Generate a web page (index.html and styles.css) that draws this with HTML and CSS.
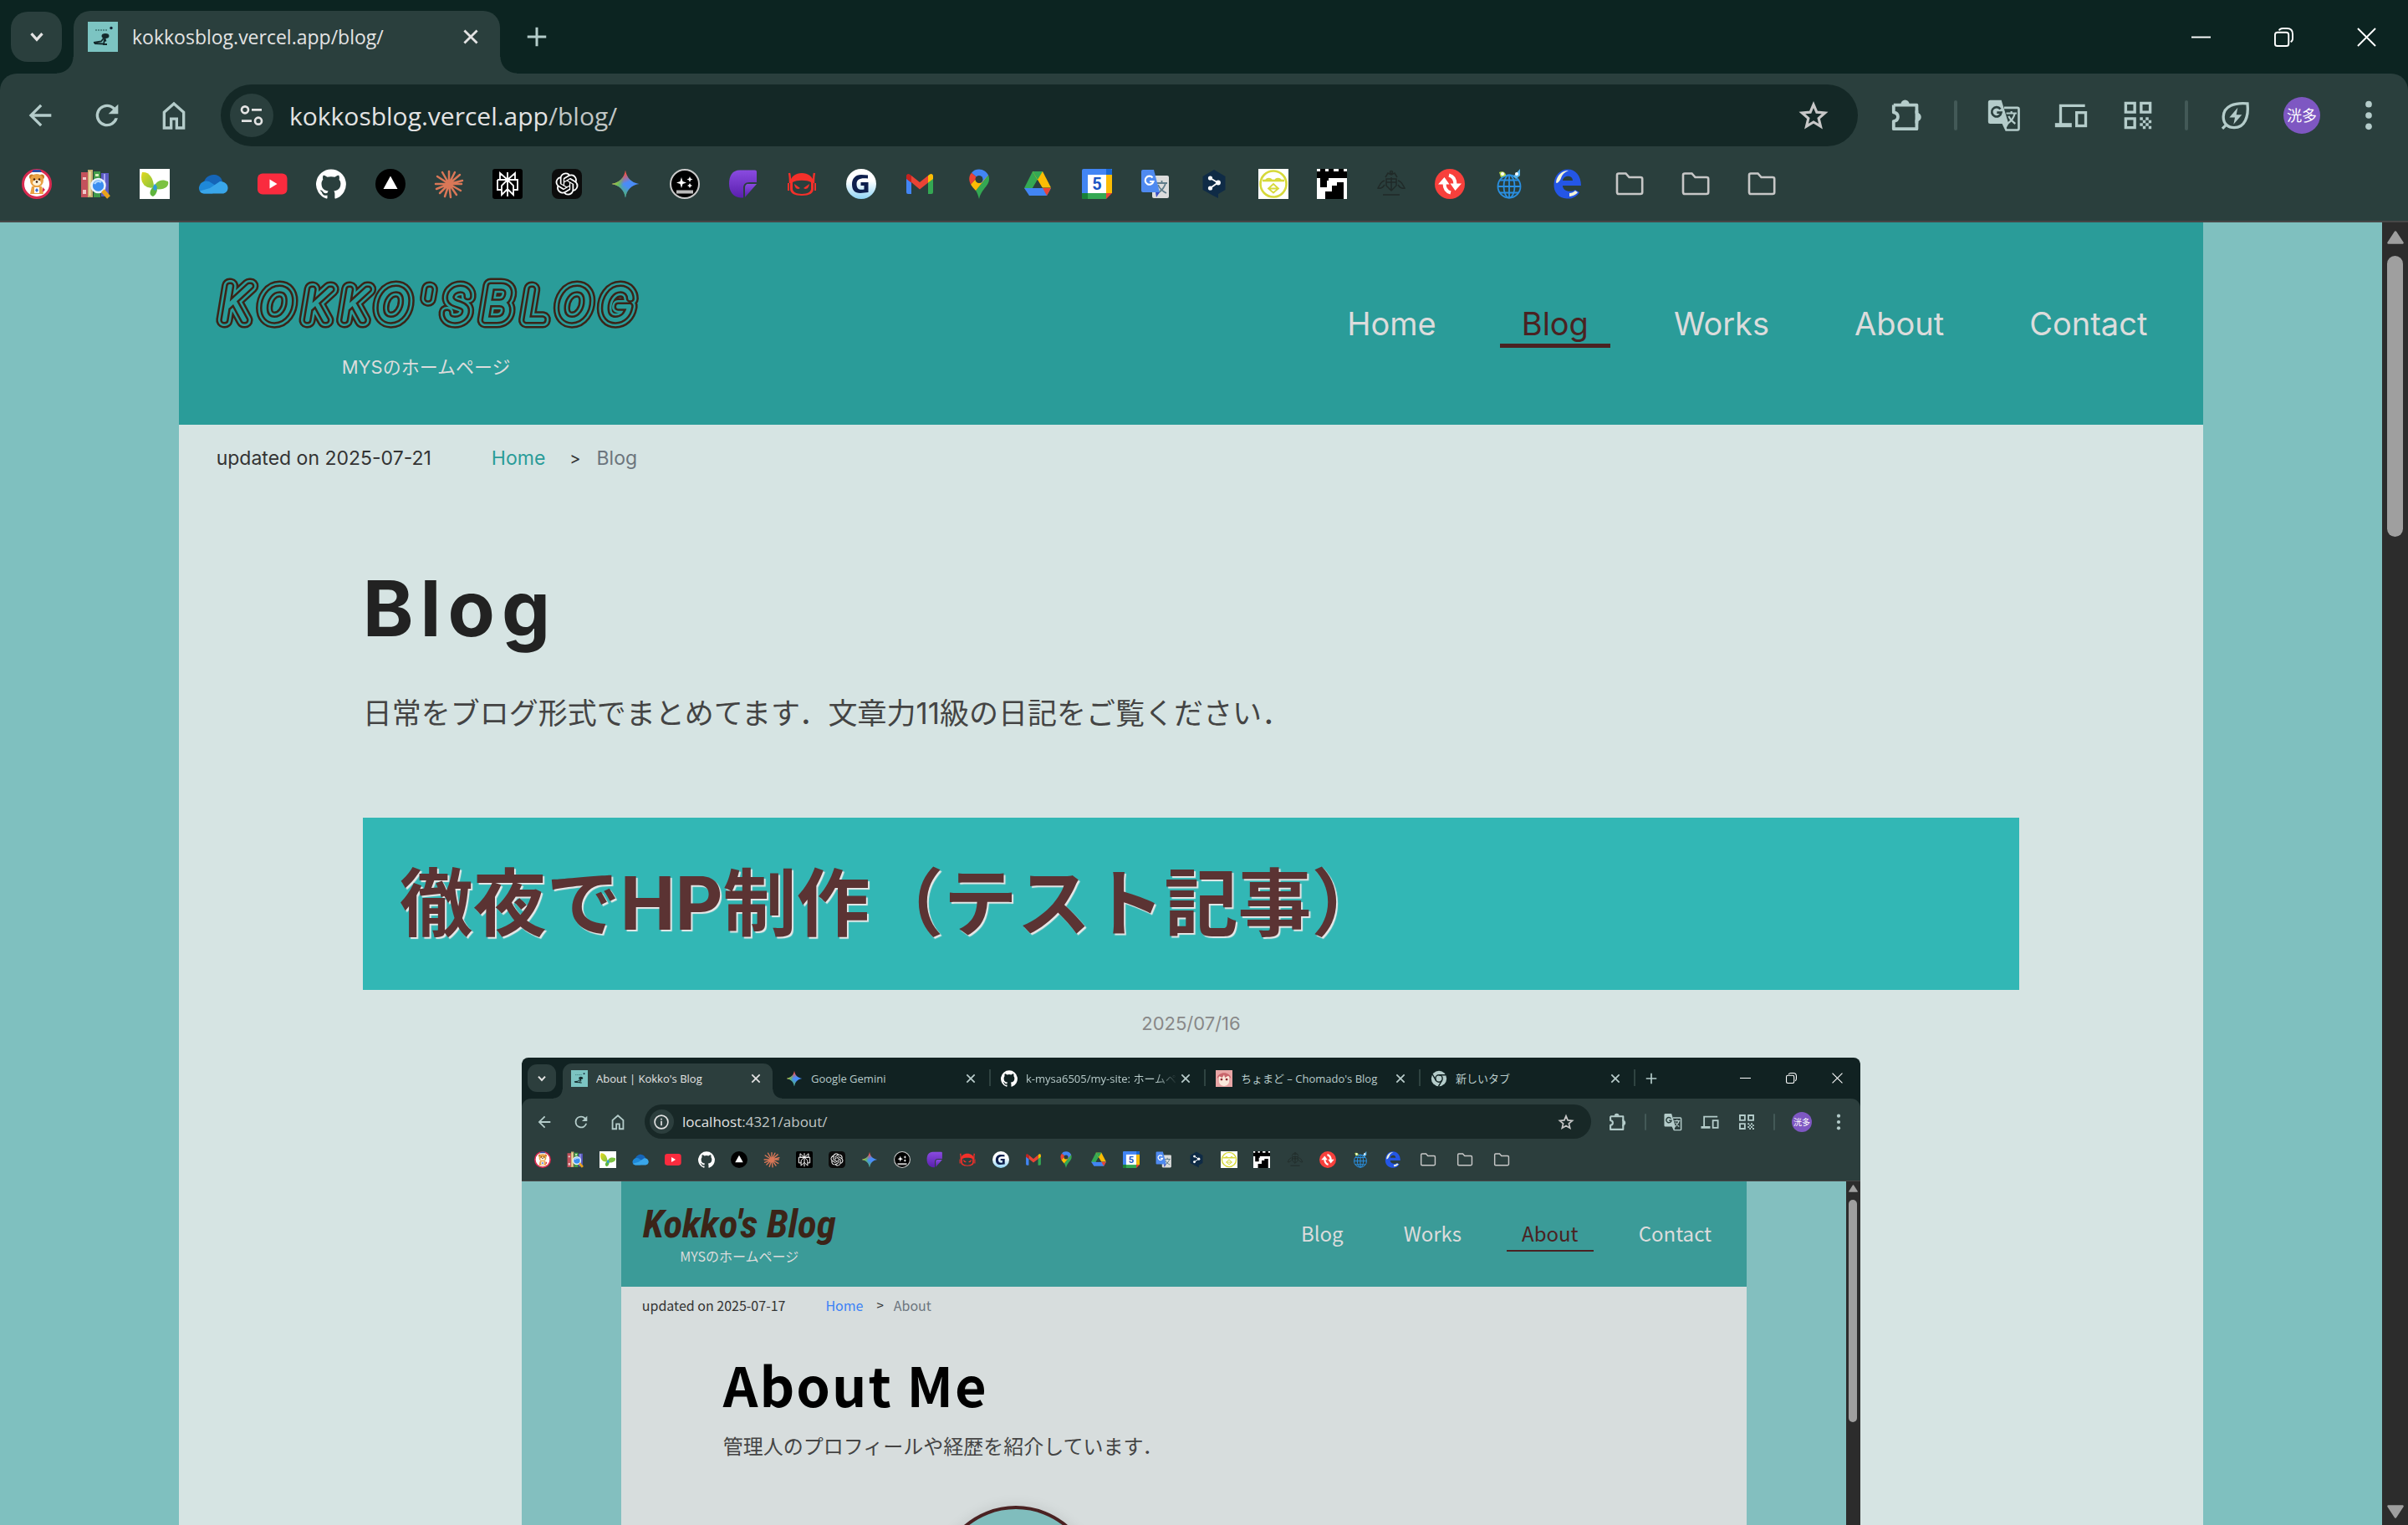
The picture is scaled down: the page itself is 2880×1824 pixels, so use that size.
FILE: index.html
```html
<!DOCTYPE html>
<html lang="ja">
<head>
<meta charset="utf-8">
<title>Blog | Kokko's Blog</title>
<link rel="stylesheet" href="styles.css">
</head>
<body>
<svg class="sprite" aria-hidden="true">
  <defs>
    <linearGradient id="g-gem" x1="0.4" y1="0.05" x2="0.6" y2="0.55"><stop offset="0.2" stop-color="#f0544c"/><stop offset="0.8" stop-color="#4a8cf7"/></linearGradient>
    <linearGradient id="g-gem2" x1="0" y1="0.4" x2="0.55" y2="0.55"><stop offset="0.1" stop-color="#f7c32e"/><stop offset="0.5" stop-color="#7fbe4a"/><stop offset="1" stop-color="#4fb865" stop-opacity="0"/></linearGradient>
    <linearGradient id="g-gem3" x1="0.35" y1="1" x2="0.6" y2="0.6"><stop offset="0.2" stop-color="#4fb865"/><stop offset="1" stop-color="#4fb865" stop-opacity="0"/></linearGradient>
    <linearGradient id="g-pur" x1="0" y1="0" x2="0" y2="1"><stop offset="0" stop-color="#8a4be0"/><stop offset="1" stop-color="#5a1fae"/></linearGradient>
    <linearGradient id="g-sky" x1="0" y1="0" x2="0" y2="1"><stop offset="0.4" stop-color="#ffffff"/><stop offset="1" stop-color="#8fd4f5"/></linearGradient>
    <linearGradient id="g-leaf" x1="0" y1="0" x2="1" y2="1"><stop offset="0" stop-color="#e3d81e"/><stop offset="1" stop-color="#86c440"/></linearGradient>
  </defs>

  <symbol id="chevron" viewBox="0 0 24 24"><path d="M6 8.500l6 6.500 6-6.500" fill="none" stroke="currentColor" stroke-width="3"/></symbol>
  <symbol id="close" viewBox="0 0 24 24"><path d="M5 5l14 14M19 5L5 19" fill="none" stroke="currentColor" stroke-width="2.600"/></symbol>
  <symbol id="plus" viewBox="0 0 24 24"><path d="M12 4.500v15M4.500 12h15" fill="none" stroke="currentColor" stroke-width="2"/></symbol>
  <symbol id="win-min" viewBox="0 0 24 24"><path d="M0 12h24" stroke="currentColor" stroke-width="2" /></symbol>
  <symbol id="win-max" viewBox="0 0 24 24"><rect x="1" y="6" width="17" height="17" rx="3" fill="none" stroke="currentColor" stroke-width="2"/><path d="M6 3.500C7 1.700 8.300 1 10.500 1H16c4.500 0 7 2.500 7 7v5.500c0 2-.7 3.500-2.500 4.500" fill="none" stroke="currentColor" stroke-width="2"/></symbol>
  <symbol id="win-close" viewBox="0 0 24 24"><path d="M1 1l22 22M23 1L1 23" stroke="currentColor" stroke-width="2"/></symbol>
  <symbol id="back" viewBox="0 0 24 24"><path d="M20 11H7.800l5.600-5.600L12 4l-8 8 8 8 1.400-1.400L7.800 13H20z" fill="currentColor"/></symbol>
  <symbol id="reload" viewBox="0 0 24 24"><path d="M17.650 6.350A7.960 7.960 0 0 0 12 4a8 8 0 1 0 7.730 10h-2.080A6 6 0 1 1 12 6c1.660 0 3.140.69 4.220 1.780L13 11h7V4z" fill="currentColor"/></symbol>
  <symbol id="home" viewBox="0 0 24 24"><path d="M5 21V9.700L12 3.600l7 6.100V21h-5v-6.500h-4V21z" fill="none" stroke="currentColor" stroke-width="2"/></symbol>
  <symbol id="tune" viewBox="0 0 24 24"><g fill="none" stroke="currentColor" stroke-width="2"><circle cx="6" cy="7" r="3"/><path d="M12 7h9M3 17h9"/><circle cx="18" cy="17" r="3"/></g></symbol>
  <symbol id="info" viewBox="0 0 24 24"><circle cx="12" cy="12" r="9.500" fill="none" stroke="currentColor" stroke-width="2"/><path d="M11 10.500h2V17h-2zM11 7h2v2h-2z" fill="currentColor"/></symbol>
  <symbol id="star" viewBox="0 0 24 24"><path d="M12 4.200l2.300 5.500 5.900.5-4.500 3.900 1.400 5.800-5.100-3.100-5.100 3.100 1.400-5.800-4.500-3.900 5.900-.5z" fill="none" stroke="currentColor" stroke-width="1.900"/></symbol>
  <symbol id="puzzle" viewBox="2.500 1.500 21 21"><path d="M4.500 5.500H19v5.300M19 14.800v5.700H4.500v-4.800c3.600-.6 3.600-5 0-5.600V5.500" fill="none" stroke="currentColor" stroke-width="2" stroke-linejoin="round"/><path d="M9 5a2.700 2.700 0 0 1 5.400 0zM19 10.200a2.800 2.800 0 0 1 0 5.600z" fill="currentColor"/><path d="M19 9v8" stroke="currentColor" stroke-width="2"/></symbol>
  <symbol id="translate" viewBox="0 0 24 24"><path d="M12 6.500h9.500a1 1 0 0 1 1 1v14a1 1 0 0 1-1 1H13.500L11 17" fill="none" stroke="currentColor" stroke-width="1.600"/><path d="M2 1h8l5.200 17H2a1.500 1.500 0 0 1-1.500-1.500v-14A1.500 1.500 0 0 1 2 1zM12 18h3.200l-2.400 4.500z" fill="currentColor"/><path d="M9.300 7.500A3.400 3.400 0 1 0 9.900 10H6.800" fill="none" stroke="#2a3f3d" stroke-width="1.600"/><path d="M13.500 10.500h7.500M17.200 9v1.500M19.600 10.500c-.6 3-2.500 5.500-5 7.300M15.200 12.500c1 2.200 2.600 4 4.800 5.500" fill="none" stroke="currentColor" stroke-width="1.300"/></symbol>
  <symbol id="devices" viewBox="0 0 24 24"><path d="M22 5H4.500v13" fill="none" stroke="currentColor" stroke-width="2"/><path d="M.5 17.500h12v3H.5z" fill="currentColor"/><rect x="16" y="10" width="6.500" height="9.500" fill="none" stroke="currentColor" stroke-width="2"/></symbol>
  <symbol id="qr" viewBox="-0.500 -0.500 26 26"><g fill="none" stroke="currentColor" stroke-width="2.200"><path d="M3 3h7v7H3zM15 3h7v7h-7zM3 15h7v7H3z"/></g><path d="M14 14h2.300v2.300H14zM18.500 14h2.300v2.300h-2.300zM16.300 16.300h2.200v2.200h-2.200zM20.800 16.300H23v2.200h-2.200zM14 18.500h2.300v2.300H14zM18.500 18.500h2.300v2.300h-2.300zM16.300 20.800h2.200V23h-2.200zM20.800 20.800H23V23h-2.200z" fill="currentColor"/></symbol>
  <symbol id="eco" viewBox="0 0 24 24"><path d="M21 3.500c-9-.8-17 1.500-17.300 9.500 0 5 3.300 7.800 7.800 7.800C19 20.800 22 13 21 3.500zM6 18.500L3 21.500" fill="none" stroke="currentColor" stroke-width="2"/><path d="M14 6.500l-6 7h4l-1 5 6-7h-4z" fill="currentColor"/></symbol>
  <symbol id="dots" viewBox="0 0 24 24"><g fill="currentColor"><circle cx="12" cy="4" r="2.300"/><circle cx="12" cy="12" r="2.300"/><circle cx="12" cy="20" r="2.300"/></g></symbol>
  <symbol id="folder" viewBox="0 0 36 36"><path d="M3 28V7.500C3 6 3.700 5.500 5 5.500h8.500l4 4.500H31c1.500 0 2.200.7 2.200 2V28c0 1.300-.7 2-2.200 2H5c-1.300 0-2-.7-2-2z" fill="none" stroke="#c7c7c7" stroke-width="2.600"/></symbol>
  <symbol id="tri-up" viewBox="0 0 20 16"><path d="M10 1.500L18.500 14.500h-17z" fill="#9f9f9f" stroke="#9f9f9f" stroke-width="2.500" stroke-linejoin="round"/></symbol>
  <symbol id="tri-down" viewBox="0 0 20 16"><path d="M10 14.500L18.500 1.500h-17z" fill="#9f9f9f" stroke="#9f9f9f" stroke-width="2.500" stroke-linejoin="round"/></symbol>

  <symbol id="fav-kokko" viewBox="0 0 36 36"><path d="M0 0h36v36H0z" fill="#7cc4c2"/><path d="M9 10h14" stroke="#4c8a88" stroke-width="1.800" stroke-dasharray="2 1"/><circle cx="28" cy="7.500" r="1.700" fill="#123"/><ellipse cx="21" cy="17" rx="4.500" ry="3" fill="#142a2c"/><path d="M7 25l9-1.500 4-5 1.500 5M20 21l-1 6h4M8 26l11 .5" fill="none" stroke="#142a2c" stroke-width="1.800"/></symbol>
  <symbol id="b-bear" viewBox="0 0 36 36"><circle cx="18" cy="18" r="16.500" fill="#fff" stroke="#d82a50" stroke-width="3"/><circle cx="12" cy="9.500" r="3" fill="#c87a25"/><circle cx="24" cy="9.500" r="3" fill="#c87a25"/><path d="M12 4h12l-2-3h-8z" fill="#2d4fa8"/><circle cx="18" cy="14" r="8" fill="#e9a245"/><ellipse cx="18" cy="16.500" rx="5" ry="3.500" fill="#fff3d8"/><circle cx="15" cy="12.500" r="1.200" fill="#402010"/><circle cx="21" cy="12.500" r="1.200" fill="#402010"/><circle cx="18" cy="15.500" r="1.300" fill="#402010"/><path d="M12 21h12l2 9H10z" fill="#e9a245"/><path d="M15 22h6v7h-6z" fill="#fff"/><path d="M18 23l2 2.500-2 2.500-2-2.500z" fill="#3f6fd0"/><path d="M25 22l3 3-3 3z" fill="#d82a50"/></symbol>
  <symbol id="b-books" viewBox="0 0 36 36"><path d="M1 4h8v30H1z" fill="#c4525c"/><path d="M3 10h4v3H3zM3 25h4v5H3z" fill="#f0c9c9"/><path d="M9 1h6v33H9z" fill="#c9b070"/><path d="M10.500 3h2v29h-2z" fill="#efe0b0"/><path d="M16 3h8v31h-8z" fill="#3f9a48"/><path d="M18 6h4v3h-4z" fill="#d5edb8"/><path d="M25 5h9v28h-9z" fill="#5b5bc4"/><path d="M28 6h2v24h-2z" fill="#a5a5ef"/><circle cx="21.500" cy="20" r="8" fill="#3b8df0" stroke="#e8f2fb" stroke-width="2.600"/><path d="M17 18c2-4 6-4 8-2" stroke="#a9d4ff" stroke-width="2.500" fill="none"/><path d="M27 26l7 8" stroke="#e9a21c" stroke-width="5"/></symbol>
  <symbol id="b-leaf" viewBox="0 0 36 36"><path d="M0 0h36v36H0z" fill="#fff"/><path d="M3 4c8-1 14 7 14 18C8 25-1 17 3 4z" fill="url(#g-leaf)"/><path d="M18 22c0-7 8-11 16-7 2 6-5 11-16 9z" fill="#7cc242"/><path d="M18 20c5 3 3 10-2 13-5-1-5-8 2-13z" fill="#5fb53d"/><path d="M18 18c3 2 4 5 1 8-3-1-4-4-1-8z" fill="#2f9ad8"/></symbol>
  <symbol id="b-cloud" viewBox="0 0 36 36"><path d="M7 21C5 13 12 6 20 7c5 .6 8 4 9 8l-12 10z" fill="#1565b8"/><path d="M1 22c1-6 7-9 12-7l13 8-9 6.500H7.500C3 29.500.5 26 1 22z" fill="#1e88d8"/><path d="M14 23l12-8c6-.5 10 4 9.500 8.500-.4 3.500-3 6-6.500 6H7c-2 0-4-1-5-3z" fill="#39a6ea"/></symbol>
  <symbol id="b-yt" viewBox="0 0 36 36"><rect y="5.500" width="35.500" height="25" rx="6" fill="#fa2b3e"/><path d="M14.500 12.500v11l9-5.500z" fill="#fff"/></symbol>
  <symbol id="b-gh" viewBox="0 0 24 24"><path fill="#fff" d="M12 .3a12 12 0 0 0-3.800 23.380c.6.120.83-.26.83-.57L9 21.070c-3.340.72-4.040-1.610-4.040-1.610-.55-1.390-1.340-1.760-1.340-1.760-1.080-.74.090-.73.090-.73 1.200.09 1.830 1.240 1.830 1.240 1.080 1.830 2.810 1.300 3.500 1 .1-.78.420-1.310.760-1.610-2.670-.3-5.470-1.330-5.470-5.930 0-1.310.470-2.380 1.240-3.220-.14-.3-.54-1.520.1-3.180 0 0 1-.32 3.300 1.230a11.500 11.500 0 0 1 6 0c2.280-1.550 3.290-1.230 3.290-1.230.640 1.660.240 2.880.120 3.180a4.650 4.650 0 0 1 1.230 3.220c0 4.610-2.800 5.630-5.480 5.920.42.360.81 1.100.81 2.220l-.01 3.290c0 .31.2.69.820.57A12 12 0 0 0 12 .3"/></symbol>
  <symbol id="b-vercel" viewBox="0 0 36 36"><circle cx="18" cy="18" r="18" fill="#000"/><path d="M18 8.500l8.500 15.500h-17z" fill="#fff"/></symbol>
  <symbol id="b-claude" viewBox="0 0 36 36"><g stroke="#d97757" stroke-width="2.500" stroke-linecap="round"><path d="M18 18V3M18 18l7-14M18 18L31 7M18 18l16-4M18 18h15M18 18l14 8M18 18l9 13M18 18l2 16M18 18l-5 15M18 18L7 29M18 18L3 24M18 18H2M18 18L4 9M18 18L10 4"/></g></symbol>
  <symbol id="b-pplx" viewBox="0 0 36 36"><rect width="36" height="36" rx="3" fill="#000"/><path d="M18 4v29M9 5l9 8 9-8v8H9zM6 13h24v12h-5M6 13v12h5M18 13l-7 7v11l7-7 7 7V20z" fill="none" stroke="#fff" stroke-width="1.800"/></symbol>
  <symbol id="b-gpt" viewBox="0 0 36 36"><rect width="36" height="36" rx="8" fill="#0c0c0c"/><path transform="translate(4.500 4.500) scale(1.125)" fill="#fff" d="M22.2819 9.8211a5.9847 5.9847 0 0 0-.5157-4.9108 6.0462 6.0462 0 0 0-6.5098-2.9A6.0651 6.0651 0 0 0 4.9807 4.1818a5.9847 5.9847 0 0 0-3.9977 2.9 6.0462 6.0462 0 0 0 .7427 7.0966 5.98 5.98 0 0 0 .511 4.9107 6.051 6.051 0 0 0 6.5146 2.9001A5.9847 5.9847 0 0 0 13.2599 24a6.0557 6.0557 0 0 0 5.7718-4.2058 5.9894 5.9894 0 0 0 3.9977-2.9001 6.0557 6.0557 0 0 0-.7475-7.0729zm-9.022 12.6081a4.4755 4.4755 0 0 1-2.8764-1.0408l.1419-.0804 4.7783-2.7582a.7948.7948 0 0 0 .3927-.6813v-6.7369l2.02 1.1686a.071.071 0 0 1 .038.0615v5.5826a4.504 4.504 0 0 1-4.4945 4.4944zm-9.6607-4.1254a4.4708 4.4708 0 0 1-.5346-3.0137l.142.0852 4.783 2.7582a.7712.7712 0 0 0 .7806 0l5.8428-3.3685v2.3324a.0804.0804 0 0 1-.0332.0615L9.74 19.9502a4.4992 4.4992 0 0 1-6.1408-1.6464zM2.3408 7.8956a4.485 4.485 0 0 1 2.3655-1.9728V11.6a.7664.7664 0 0 0 .3879.6765l5.8144 3.3543-2.0201 1.1685a.0757.0757 0 0 1-.071 0l-4.8303-2.7865A4.504 4.504 0 0 1 2.3408 7.872zm16.5963 3.8558L13.1038 8.364 15.1192 7.2a.0757.0757 0 0 1 .071 0l4.8303 2.7913a4.4944 4.4944 0 0 1-.6765 8.1042v-5.6772a.79.79 0 0 0-.407-.667zm2.0107-3.0231l-.142-.0852-4.7735-2.7818a.7759.7759 0 0 0-.7854 0L9.409 9.2297V6.8974a.0662.0662 0 0 1 .0284-.0615l4.8303-2.7866a4.4992 4.4992 0 0 1 6.6802 4.66zM8.3065 12.863l-2.02-1.1638a.0804.0804 0 0 1-.038-.0567V6.0742a4.4992 4.4992 0 0 1 7.3757-3.4537l-.142.0805L8.704 5.459a.7948.7948 0 0 0-.3927.6813zm1.0976-2.3654l2.602-1.4998 2.6069 1.4998v2.9994l-2.5974 1.4997-2.6067-1.4997Z"/></symbol>
  <symbol id="b-gemini" viewBox="0 0 36 36"><path d="M18 1.500c1.500 9 7 15 16.500 16.500C25 19.500 19.500 25.500 18 34.500 16.500 25.500 11 19.500 1.500 18 11 16.500 16.500 10.500 18 1.500z" fill="url(#g-gem)"/><path d="M18 34.500C16.500 25.500 11 19.500 1.500 18c6-1 10.500-3.800 13.300-8L25 21.500c-4 3-6.200 7.500-7 13z" fill="url(#g-gem2)"/><path d="M18 1.500c1.500 9 7 15 16.500 16.500C25 19.500 19.500 25.500 18 34.500 16.500 25.500 11 19.500 1.500 18 11 16.500 16.500 10.500 18 1.500z" fill="url(#g-gem3)"/></symbol>
  <symbol id="b-robot" viewBox="0 0 36 36"><circle cx="18" cy="18" r="17" fill="#000" stroke="#c9c9c9" stroke-width="2"/><path d="M14 10l1.500 5 4.500 1.500-4.500 1.500-1.500 5-1.500-5L8 16.500l4.500-1.500zM24 9l1 2.500 2.500 1-2.500 1L24 16l-1-2.500-2.500-1 2.500-1zM24 17l1 2 2 1-2 1-1 2-1-2-2-1 2-1z" fill="#fff"/><rect x="8" y="25.500" width="20" height="4" fill="#bbb"/></symbol>
  <symbol id="b-purple" viewBox="0 0 36 36"><path d="M14 1.500h18a2 2 0 0 1 2 2V16H25c-5 0-7 3-7 7v11.500h-3C6 34 1 27 1 18 1 8 5 1.500 14 1.500z" fill="url(#g-pur)"/><path d="M20 34V23c0-3 1-5 4-5h10z" fill="url(#g-pur)"/></symbol>
  <symbol id="b-devil" viewBox="0 0 36 36"><path d="M3 5c1 4 1 8 1 12M33 5c-1 4-1 8-1 12" stroke="#f5302a" stroke-width="2.400"/><path d="M4 17c0-8 7-12 14-12s14 4 14 12v7c0 5-5 8-14 8S4 29 4 24z" fill="#f5302a"/><path d="M7 16c5-3 17-3 22 0v8c0 3-4 6-11 6S7 27 7 24z" fill="#2a3f3d"/><path d="M9 18l7 5c-3 2-6 1-7-5zM27 18l-7 5c3 2 6 1 7-5z" fill="#f5302a"/><path d="M2 17v9M34 17v9" stroke="#f5302a" stroke-width="2"/></symbol>
  <symbol id="b-g" viewBox="0 0 36 36"><circle cx="18" cy="18" r="18" fill="url(#g-sky)"/><path d="M26 11.500V7.500L18 7c-7 0-11 4.500-11 11.500C7 25 10 29 17 29l9.500-1V16h-9v4h4v4.500c-6 1.200-9-1-9-6.300 0-5.200 3.500-7.700 13.500-6.700z" fill="#0e1f4d"/></symbol>
  <symbol id="b-gmail" viewBox="0 0 36 36"><path d="M2 11l6 5v14H4a2 2 0 0 1-2-2z" fill="#4285f4"/><path d="M34 11l-6 5v14h4a2 2 0 0 0 2-2z" fill="#34a853"/><path d="M28 8l2-1.500c2-1.500 4 0 4 2V12l-6 4.500z" fill="#fbbc04"/><path d="M8 16V8l10 8 10-8v8.500L18 24.500z" fill="#ea4335"/><path d="M2 12V8.500c0-2 2-3.500 4-2L8 8v8.500z" fill="#c5221f"/></symbol>
  <symbol id="b-maps" viewBox="0 0 36 36"><path d="M14 26c2 3 3 6 4 10 1-5 3-8 6-12 3-4 6-7 6-12 0-2-.4-3.500-1-4.500z" fill="#34a853"/><path d="M8 18.500c1.500 3 4 5 6 7.500L29 7.500 22 3z" fill="#fbbc04"/><path d="M9 4.800C11 2 14 .5 18 .5c5 0 9 3 11 7L20.500 17 14 9z" fill="#4285f4"/><path d="M9 4.800l6.500 5.500L8 18.700C5.500 14 5.500 8.500 9 4.800z" fill="#ea4335"/><circle cx="18" cy="12.500" r="4.500" fill="#2a3f3d"/></symbol>
  <symbol id="b-drive" viewBox="0 0 36 36"><path d="M12 3h12l-6 9.500-8.500 15L2 23z" fill="#34a853"/><path d="M12 3h12l10 19.500H23z" fill="#fbbc04"/><path d="M12 3h12l-6 10z" fill="#34a853"/><path d="M2 23h32l-5 9H8z" fill="#4285f4"/><path d="M18 13l-6 10h12z" fill="#2a3f3d"/><path d="M24 23h10l-5 9z" fill="#ea4335"/></symbol>
  <symbol id="b-cal" viewBox="0 0 36 36"><path d="M0 2a2 2 0 0 1 2-2h34v8H8v21H0z" fill="#4285f4"/><path d="M29 0h5a2 2 0 0 1 2 2v6h-7z" fill="#1967d2"/><path d="M29 7h7v22h-7z" fill="#fbbc04"/><path d="M0 29h29v7H2a2 2 0 0 1-2-2z" fill="#34a853"/><path d="M0 29h7v7H2a2 2 0 0 1-2-2z" fill="#188038"/><path d="M29 29h7l-7 7z" fill="#ea4335"/><path d="M7 7h22v22H7z" fill="#fff"/></symbol>
  <symbol id="b-trans" viewBox="0 0 36 36"><rect x="14" y="8" width="20" height="27" rx="2" fill="#dcdcdc"/><path d="M19 17h13M25.500 14v3M30 17c-1 5-5 9-9 12M21 19c2 5 6 8 10 10" stroke="#607d8b" stroke-width="1.800" fill="none"/><path d="M3 1h13l7 27H3a2 2 0 0 1-2-2V3a2 2 0 0 1 2-2z" fill="#4f8af0"/><path d="M18 28h5l-4 6z" fill="#3a4cc0"/><path d="M14.500 10.500a5 5 0 1 0 1 4.500H11" stroke="#fff" stroke-width="2.200" fill="none"/></symbol>
  <symbol id="b-deepl" viewBox="0 0 36 36"><path d="M18 1l13.500 8v16L23 30v5l-6-3L4.500 25V9z" fill="#0f2b46"/><path d="M13.500 11l9 5.500-9 6.500" stroke="#fff" stroke-width="1.800" fill="none"/><circle cx="13.500" cy="11" r="2.600" fill="#fff"/><circle cx="23" cy="16.500" r="2.900" fill="#fff"/><circle cx="13.500" cy="23" r="2.600" fill="#fff"/></symbol>
  <symbol id="b-yellow" viewBox="0 0 36 36"><path d="M0 0h36v36H0z" fill="#fff"/><g fill="none" stroke="#d6d93a" stroke-width="2.600"><circle cx="18" cy="18" r="15.500"/><path d="M5 14h26"/><path d="M9 14c1-3 6-3 7 0M20 14c1-3 6-3 7 0M18 18l6 5.500-6 5-6-5zM12 23.500h12" stroke-width="1.800"/></g></symbol>
  <symbol id="b-pixel" viewBox="0 0 36 36"><path d="M0 0h36v36H0z" fill="#fff"/><path d="M4 0h6v3h4V0h6v3h6V0h6v3h4v8H14v3h-2v8H4V11H0V3h4zM24 16h8v20H10v-9h8v-7h6z" fill="#000"/></symbol>
  <symbol id="b-crest" viewBox="0 0 36 36"><g fill="none" stroke="#202a28" stroke-width="1.500"><path d="M11 10l3-5 4 2 4-2 3 5M12 12h12v8l-6 6-6-6zM18 10v15M12 16h12M10 14c-5 1-6 6-8 9 3 1 6-1 8-4M26 14c5 1 6 6 8 9-3 1-6-1-8-4M8 31h20"/><circle cx="18" cy="4" r="1.500"/></g></symbol>
  <symbol id="b-sync" viewBox="0 0 36 36"><circle cx="18" cy="18" r="18" fill="#f8403c"/><path d="M19 28.500C13 27 11.500 23 11.500 17M17 7.500c6 1.500 7.500 5.500 7.500 11.500" fill="none" stroke="#fff" stroke-width="4"/><path d="M4 18.500l7.500-8.500 6 8.500zM32 17.500L24.500 26l-6-8.500z" fill="#fff"/></symbol>
  <symbol id="b-globe" viewBox="0 0 36 36"><g fill="none" stroke="#2a8fe0" stroke-width="1.800"><circle cx="18" cy="21" r="13.500"/><ellipse cx="18" cy="21" rx="6.500" ry="13.500"/><path d="M18 7.500v27M4.500 21h27M7 13.500h22M7 28.500h22"/></g><path d="M6 4c4-2 8 0 8 4l-6 2z" fill="#b4d84a"/><circle cx="10" cy="6" r="2" fill="#fff"/><path d="M23 9l8-9v8l-5 4z" fill="#58b2ea"/><circle cx="27" cy="6" r="2" fill="#fff"/></symbol>
  <symbol id="b-e" viewBox="0 0 36 36"><path d="M34 20H12c0 6 8 9 15 5l5 3c-4 6-9 8-15 7.500C7 35 1 28 1.500 18 2 8 9 .5 18 .5S34 8 34 20zM24 14c0-7-11-7-12 0z" fill="#2456e6" fill-rule="evenodd"/><path d="M4 16C5 8 11 2 19 2c-5 2-8 5-9 9-1 3-5 8-6 5zM20 33c5-.5 9-3 10-5l-3-2c-2 2-4 3-7 3z" fill="#f3f4d8"/></symbol>
  <symbol id="b-anime" viewBox="0 0 36 36"><path d="M0 0h36v36H0z" fill="#e7a5a5"/><path d="M7 14c0-8 22-8 22 0v10c0 6-6 10-11 10S7 30 7 24z" fill="#fbe9dc"/><path d="M3 18C5 2 31 2 33 18l-6-6-7 4-2-6-4 6-6-3z" fill="#c9656c"/><circle cx="12.500" cy="20" r="2.600" fill="#8a2b35"/><circle cx="23.500" cy="20" r="2.600" fill="#8a2b35"/></symbol>
  <symbol id="b-chrome" viewBox="0 0 36 36"><circle cx="18" cy="18" r="16.500" fill="#b4ccca"/><circle cx="18" cy="18" r="7.500" fill="#b4ccca" stroke="#112222" stroke-width="2.600"/><path d="M18 10.500h15M11.500 22L4 9M24.500 22L17 35" stroke="#112222" stroke-width="2.600"/></symbol>
</svg>

<div class="browser">
  <div class="tabstrip">
    <button class="tab-search" aria-label="タブを検索"><svg><use href="#chevron"/></svg></button>
    <div class="tab tab-active">
      <svg class="fav"><use href="#fav-kokko"/></svg>
      <span class="tab-title">kokkosblog.vercel.app/blog/</span>
      <button class="tab-close" aria-label="閉じる"><svg><use href="#close"/></svg></button>
    </div>
    <button class="new-tab" aria-label="新しいタブ"><svg><use href="#plus"/></svg></button>
    <div class="win">
      <button aria-label="最小化"><svg><use href="#win-min"/></svg></button>
      <button aria-label="元に戻す"><svg><use href="#win-max"/></svg></button>
      <button aria-label="ウィンドウを閉じる"><svg><use href="#win-close"/></svg></button>
    </div>
  </div>
  <div class="chrome">
    <div class="toolbar">
      <button class="tool" aria-label="戻る"><svg><use href="#back"/></svg></button>
      <button class="tool" aria-label="再読み込み"><svg><use href="#reload"/></svg></button>
      <button class="tool" aria-label="ホーム"><svg><use href="#home"/></svg></button>
      <div class="omni">
        <button class="site-info" aria-label="サイト情報"><svg><use href="#tune"/></svg></button>
        <span class="url">kokkosblog.vercel.app<span class="path">/blog/</span></span>
        <button class="bookmark-star" aria-label="ブックマーク"><svg><use href="#star"/></svg></button>
      </div>
      <button class="tool" aria-label="拡張機能"><svg><use href="#puzzle"/></svg></button>
      <span class="sep"></span>
      <button class="tool" aria-label="翻訳"><svg><use href="#translate"/></svg></button>
      <button class="tool" aria-label="デバイス"><svg><use href="#devices"/></svg></button>
      <button class="tool" aria-label="QR コード"><svg><use href="#qr"/></svg></button>
      <span class="sep"></span>
      <button class="tool" aria-label="省エネ"><svg><use href="#eco"/></svg></button>
      <button class="tool" aria-label="プロフィール"><span class="avatar">洸多</span></button>
      <button class="tool" aria-label="メニュー"><svg><use href="#dots"/></svg></button>
    </div>
    <nav class="bookmarks" aria-label="ブックマーク">
      <div class="sites">
        <a href="#"><svg><use href="#b-bear"/></svg></a><a href="#"><svg><use href="#b-books"/></svg></a><a href="#"><svg><use href="#b-leaf"/></svg></a><a href="#"><svg><use href="#b-cloud"/></svg></a><a href="#"><svg><use href="#b-yt"/></svg></a><a href="#"><svg><use href="#b-gh"/></svg></a><a href="#"><svg><use href="#b-vercel"/></svg></a><a href="#"><svg><use href="#b-claude"/></svg></a><a href="#"><svg><use href="#b-pplx"/></svg></a><a href="#"><svg><use href="#b-gpt"/></svg></a><a href="#"><svg><use href="#b-gemini"/></svg></a><a href="#"><svg><use href="#b-robot"/></svg></a><a href="#"><svg><use href="#b-purple"/></svg></a><a href="#"><svg><use href="#b-devil"/></svg></a><a href="#"><svg><use href="#b-g"/></svg></a><a href="#"><svg><use href="#b-gmail"/></svg></a><a href="#"><svg><use href="#b-maps"/></svg></a><a href="#"><svg><use href="#b-drive"/></svg></a><a href="#"><svg viewBox="0 0 36 36"><use href="#b-cal"/><text class="cal-day" x="18" y="25" text-anchor="middle">5</text></svg></a><a href="#"><svg><use href="#b-trans"/></svg></a><a href="#"><svg><use href="#b-deepl"/></svg></a><a href="#"><svg><use href="#b-yellow"/></svg></a><a href="#"><svg><use href="#b-pixel"/></svg></a><a href="#"><svg><use href="#b-crest"/></svg></a><a href="#"><svg><use href="#b-sync"/></svg></a><a href="#"><svg><use href="#b-globe"/></svg></a><a href="#"><svg><use href="#b-e"/></svg></a>
      </div>
      <div class="folders">
        <button aria-label="フォルダ 1"><svg><use href="#folder"/></svg></button><button aria-label="フォルダ 2"><svg><use href="#folder"/></svg></button><button aria-label="フォルダ 3"><svg><use href="#folder"/></svg></button>
      </div>
    </nav>
  </div>

  <div class="viewport">
    <div class="page">
      <div class="site">
        <header class="site-header">
          <a class="brand" href="#">
            <svg class="logo" viewBox="0 0 512 88" role="img" aria-label="Kokko'sBlog">
              <g class="ring-1"><text id="logo-text" x="10" y="64"><tspan class="lg">K</tspan>OKKO'S<tspan class="lg">B</tspan>LOG</text></g>
              <use href="#logo-text" class="ring-2"/>
              <use href="#logo-text" class="ring-3"/>
              <use href="#logo-text" class="ring-4"/>
            </svg>
            <span class="tagline">MYSのホームページ</span>
          </a>
          <nav class="site-nav">
            <a href="#">Home</a>
            <a href="#" class="current">Blog</a>
            <a href="#">Works</a>
            <a href="#">About</a>
            <a href="#">Contact</a>
          </nav>
        </header>
        <div class="crumbs"><span class="updated">updated on 2025-07-21</span><a href="#">Home</a><span class="gt">&gt;</span><span class="here">Blog</span></div>
        <main class="article">
          <h1>Blog</h1>
          <p class="lead">日常をブログ形式でまとめてます．文章力11級の日記をご覧ください．</p>
          <h2>徹夜でHP制作（テスト記事）</h2>
          <time class="date">2025/07/16</time>

          <div class="browser shot">
            <div class="tabstrip">
              <button class="tab-search" aria-label="タブを検索"><svg><use href="#chevron"/></svg></button>
              <div class="tab tab-active"><svg class="fav"><use href="#fav-kokko"/></svg><span class="tab-title">About | Kokko's Blog</span><button class="tab-close" aria-label="閉じる"><svg><use href="#close"/></svg></button></div>
              <div class="tab"><svg class="fav"><use href="#b-gemini"/></svg><span class="tab-title">Google Gemini</span><button class="tab-close" aria-label="閉じる"><svg><use href="#close"/></svg></button></div>
              <div class="tab"><svg class="fav"><use href="#b-gh"/></svg><span class="tab-title fade">k-mysa6505/my-site: ホームペ</span><button class="tab-close" aria-label="閉じる"><svg><use href="#close"/></svg></button></div>
              <div class="tab"><svg class="fav"><use href="#b-anime"/></svg><span class="tab-title">ちょまど – Chomado's Blog</span><button class="tab-close" aria-label="閉じる"><svg><use href="#close"/></svg></button></div>
              <div class="tab"><svg class="fav"><use href="#b-chrome"/></svg><span class="tab-title">新しいタブ</span><button class="tab-close" aria-label="閉じる"><svg><use href="#close"/></svg></button></div>
              <button class="new-tab" aria-label="新しいタブ"><svg><use href="#plus"/></svg></button>
              <div class="win">
                <button aria-label="最小化"><svg><use href="#win-min"/></svg></button>
                <button aria-label="元に戻す"><svg><use href="#win-max"/></svg></button>
                <button aria-label="ウィンドウを閉じる"><svg><use href="#win-close"/></svg></button>
              </div>
            </div>
            <div class="chrome">
              <div class="toolbar">
                <button class="tool" aria-label="戻る"><svg><use href="#back"/></svg></button>
                <button class="tool" aria-label="再読み込み"><svg><use href="#reload"/></svg></button>
                <button class="tool" aria-label="ホーム"><svg><use href="#home"/></svg></button>
                <div class="omni">
                  <button class="site-info" aria-label="サイト情報"><svg><use href="#info"/></svg></button>
                  <span class="url">localhost<span class="path">:4321/about/</span></span>
                  <button class="bookmark-star" aria-label="ブックマーク"><svg><use href="#star"/></svg></button>
                </div>
                <button class="tool" aria-label="拡張機能"><svg><use href="#puzzle"/></svg></button>
                <span class="sep"></span>
                <button class="tool" aria-label="翻訳"><svg><use href="#translate"/></svg></button>
                <button class="tool" aria-label="デバイス"><svg><use href="#devices"/></svg></button>
                <button class="tool" aria-label="QR コード"><svg><use href="#qr"/></svg></button>
                <span class="sep"></span>
                <button class="tool" aria-label="プロフィール"><span class="avatar">洸多</span></button>
                <button class="tool" aria-label="メニュー"><svg><use href="#dots"/></svg></button>
              </div>
              <nav class="bookmarks" aria-label="ブックマーク">
                <div class="sites">
                  <a href="#"><svg><use href="#b-bear"/></svg></a><a href="#"><svg><use href="#b-books"/></svg></a><a href="#"><svg><use href="#b-leaf"/></svg></a><a href="#"><svg><use href="#b-cloud"/></svg></a><a href="#"><svg><use href="#b-yt"/></svg></a><a href="#"><svg><use href="#b-gh"/></svg></a><a href="#"><svg><use href="#b-vercel"/></svg></a><a href="#"><svg><use href="#b-claude"/></svg></a><a href="#"><svg><use href="#b-pplx"/></svg></a><a href="#"><svg><use href="#b-gpt"/></svg></a><a href="#"><svg><use href="#b-gemini"/></svg></a><a href="#"><svg><use href="#b-robot"/></svg></a><a href="#"><svg><use href="#b-purple"/></svg></a><a href="#"><svg><use href="#b-devil"/></svg></a><a href="#"><svg><use href="#b-g"/></svg></a><a href="#"><svg><use href="#b-gmail"/></svg></a><a href="#"><svg><use href="#b-maps"/></svg></a><a href="#"><svg><use href="#b-drive"/></svg></a><a href="#"><svg viewBox="0 0 36 36"><use href="#b-cal"/><text class="cal-day" x="18" y="25" text-anchor="middle">5</text></svg></a><a href="#"><svg><use href="#b-trans"/></svg></a><a href="#"><svg><use href="#b-deepl"/></svg></a><a href="#"><svg><use href="#b-yellow"/></svg></a><a href="#"><svg><use href="#b-pixel"/></svg></a><a href="#"><svg><use href="#b-crest"/></svg></a><a href="#"><svg><use href="#b-sync"/></svg></a><a href="#"><svg><use href="#b-globe"/></svg></a><a href="#"><svg><use href="#b-e"/></svg></a>
                </div>
                <div class="folders">
                  <button aria-label="フォルダ 1"><svg><use href="#folder"/></svg></button><button aria-label="フォルダ 2"><svg><use href="#folder"/></svg></button><button aria-label="フォルダ 3"><svg><use href="#folder"/></svg></button>
                </div>
              </nav>
            </div>
            <div class="viewport">
              <div class="page">
                <div class="site">
                  <header class="site-header">
                    <a class="brand" href="#"><span class="brand-name">Kokko's Blog</span><span class="tagline">MYSのホームページ</span></a>
                    <nav class="site-nav"><a href="#">Blog</a><a href="#">Works</a><a href="#" class="current">About</a><a href="#">Contact</a></nav>
                  </header>
                  <div class="crumbs"><span class="updated">updated on 2025-07-17</span><a href="#">Home</a><span class="gt">&gt;</span><span class="here">About</span></div>
                  <div class="about">
                    <h3>About Me</h3>
                    <p>管理人のプロフィールや経歴を紹介しています．</p>
                    <div class="portrait"></div>
                  </div>
                </div>
              </div>
              <div class="scrollbar"><svg><use href="#tri-up"/></svg><span class="thumb"></span></div>
            </div>
          </div>
        </main>
      </div>
    </div>
    <div class="scrollbar"><svg><use href="#tri-up"/></svg><span class="thumb"></span><svg class="down"><use href="#tri-down"/></svg></div>
  </div>
</div>
</body>
</html>
```
FILE: styles.css
```css
* { box-sizing: border-box; }
html, body { height: 100%; margin: 0; }
body { overflow: hidden; font-family: Inter, "Noto Sans CJK JP", sans-serif; }
button { padding: 0; border: 0; background: none; color: inherit; font: inherit; display: flex; align-items: center; justify-content: center; flex: none; }
svg { display: block; flex: none; }
a { text-decoration: none; }
.sprite { position: absolute; width: 0; height: 0; }
.cal-day { font: 700 20px Roboto, sans-serif; fill: #1a56c4; }

/* Browser frame. Sizes come from variables so the embedded window can reuse it. */
.browser {
  --strip: #0c2421; --bar: #2a3f3d; --omni: #142826;
  --strip-h: 88px; --ts-w: 61px; --ts-h: 60px; --ts-r: 20px; --strip-pad: 13px; --ts-gap: 14px;
  --tab-w: 510px; --tab-h: 75px; --tab-r: 20px; --tab-pad: 17px; --fav: 36px; --tab-fs: 23px;
  --close: 26px; --close-box: 36px; --plus: 36px; --win-w: 99px; --win-icon: 23px;
  --tool: 80px; --icon: 40px; --bar-pad: 13px; --omni-h: 74px; --omni-gap: 16px; --info: 52px; --info-icon: 32px; --url-fs: 30px;
  --sep-w: 36px; --sep-h: 36px; --sep-t: 4px; --avatar: 44px; --avatar-fs: 18px;
  --bm-h: 89px; --bm-icon: 36px; --bm-pad: 26px; --bm-w: 1867px; --folder-gap: 43px; --folder-lead: 38px; --edge: 2px;
  --sb-w: 31px; --tri: 20px; --thumb-w: 19px; --thumb-h: 336px; --sb-pad: 10px;
  display: flex; flex-direction: column; height: 100vh; background: var(--strip);
}
.tabstrip, .toolbar, .bookmarks { font-family: "Open Sans", "Noto Sans CJK JP", sans-serif; }
.tabstrip { height: var(--strip-h); flex: none; display: flex; align-items: center; padding-left: var(--strip-pad); color: #e3e3e3; }
.tab-search { width: var(--ts-w); height: var(--ts-h); border-radius: var(--ts-r); background: var(--bar); margin-right: var(--ts-gap); }
.tab-search svg { width: var(--close); height: var(--close); }
.tab { position: relative; align-self: flex-end; width: var(--tab-w); height: var(--tab-h); display: flex; align-items: center; gap: var(--tab-pad); padding: 0 var(--tab-pad) var(--bar-pad); color: #b9cccb; flex: none; }
.tab-active { background: var(--bar); border-radius: var(--tab-r) var(--tab-r) 0 0; color: #e3e3e3; }
.tab-active::before, .tab-active::after { content: ""; position: absolute; bottom: 0; width: var(--tab-r); height: var(--tab-r); }
.tab-active::before { right: 100%; background: radial-gradient(circle at 0 0, transparent calc(var(--tab-r) - 1px), var(--bar) var(--tab-r)); }
.tab-active::after { left: 100%; background: radial-gradient(circle at 100% 0, transparent calc(var(--tab-r) - 1px), var(--bar) var(--tab-r)); }
.fav { width: var(--fav); height: var(--fav); }
.tab-title { flex: 1; min-width: 0; overflow: hidden; white-space: nowrap; font-size: var(--tab-fs); }
.tab .fade { margin-right: -10px; -webkit-mask-image: linear-gradient(to right, #000 85%, transparent); mask-image: linear-gradient(to right, #000 85%, transparent); }
.tab-close { width: var(--close-box); height: var(--close-box); }
.tab-close svg { width: var(--close); height: var(--close); }
.new-tab { width: var(--ts-w); height: var(--ts-h); margin-left: var(--strip-pad); color: #b4ccca; }
.new-tab svg { width: var(--plus); height: var(--plus); }
.win { display: flex; margin-left: auto; color: #fff; }
.win button { width: var(--win-w); height: var(--ts-h); }
.win svg { width: var(--win-icon); height: var(--win-icon); }

.chrome { background: var(--bar); border-radius: var(--tab-r) var(--tab-r) 0 0; border-bottom: var(--edge) solid #474747; flex: none; color: #b4ccca; }
.toolbar { display: flex; align-items: center; padding: var(--bar-pad) 7px 0 8px; }
.tool { width: var(--tool); height: var(--omni-h); }
.tool svg { width: var(--icon); height: var(--icon); }
.omni { flex: 1; height: var(--omni-h); margin: 0 calc(var(--omni-gap) + 3px) 0 var(--omni-gap); border-radius: 40px; background: var(--omni); display: flex; align-items: center; padding: 0 11px; color: #e3e3e3; }
.site-info { width: var(--info); height: var(--info); border-radius: 50%; background: var(--bar); }
.site-info svg { width: var(--info-icon); height: var(--info-icon); }
.url { flex: 1; margin-left: 19px; font-size: var(--url-fs); }
.path { color: #c0c6c5; }
.bookmark-star { width: calc(var(--tool) + 4px); color: #c7c7c7; }
.bookmark-star svg { width: var(--icon); height: var(--icon); }
.sep { width: var(--sep-w); display: flex; justify-content: center; }
.sep::before { content: ""; width: var(--sep-t); height: var(--sep-h); border-radius: 2px; background: #435957; }
.avatar { width: var(--avatar); height: var(--avatar); border-radius: 50%; background: #7e57c2; color: #fff; font-size: var(--avatar-fs); line-height: var(--avatar); text-align: center; }
.bookmarks { height: var(--bm-h); padding-left: var(--bm-pad); display: flex; align-items: center; }
.sites { width: var(--bm-w); display: flex; justify-content: space-between; }
.bookmarks svg { width: var(--bm-icon); height: var(--bm-icon); }
.folders { display: flex; gap: var(--folder-gap); margin-left: var(--folder-lead); }

.viewport { flex: 1; min-height: 0; display: flex; }
.page { flex: 1; min-width: 0; background: #7fc0bf; overflow: hidden; }
.scrollbar { width: var(--sb-w); flex: none; background: #2c2c2c; display: flex; flex-direction: column; align-items: center; padding: var(--sb-pad) 0 8px; }
.scrollbar svg { width: var(--tri); height: 16px; }
.thumb { width: var(--thumb-w); height: var(--thumb-h); margin-top: 14px; border-radius: 10px; background: #9f9f9f; }
.down { margin-top: auto; }

/* Blog page */
.site { width: 85%; margin: 0 auto; background: #d6e4e3; min-height: 100%; }
.site-header { height: 242px; background: #2a9c99; display: flex; align-items: center; justify-content: space-between; padding: 0 41px 0 40px; }
.brand { display: flex; flex-direction: column; align-items: center; color: #dcdcdc; }
.logo { width: 512px; height: 88px; margin-bottom: 16px; font-family: Inter, sans-serif; font-size: 51px; font-weight: 100; font-style: italic; letter-spacing: 14px; overflow: visible; stroke-linejoin: round; }
.lg { font-size: 56px; }
/* Nested strokes turn each letter into parallel lines */
.ring-1 { stroke: #3b2418; stroke-width: 19px; fill: #3b2418; }
.ring-2 { stroke: #2a9c99; stroke-width: 14px; fill: #2a9c99; }
.ring-3 { stroke: #3b2418; stroke-width: 9px; fill: #3b2418; }
.ring-4 { stroke: #2a9c99; stroke-width: 4px; fill: #2a9c99; }
.tagline { font-size: 22px; line-height: 32px; }
.site-nav { display: flex; gap: 50px; }
.site-nav a { color: #dcdcdc; font-size: 38px; font-weight: 400; line-height: 48px; padding: 4px 26px 0; border-bottom: 5px solid transparent; }
.site-nav .current { color: #4a2222; border-bottom-color: #4a2222; }
.crumbs { display: flex; padding: 24px 45px 0; font-size: 23px; line-height: 32px; color: #333; }
.crumbs a { color: #2a9c99; margin-left: 72px; }
.gt { font-size: 20px; margin: 0 19px 0 29px; }
.here { color: #6c757d; }
.article { padding: 109px 220px 0; }
h1 { margin: 0; font-size: 92px; line-height: 110px; letter-spacing: 8px; color: #222; }
.lead { margin: 46px 0 101px; font-size: 35px; line-height: 48px; color: #444; }
h2 { margin: 0; padding: 47px 44px 49px; background: #32b7b5; color: #5b3333; font-size: 88px; line-height: 110px; text-shadow: 2px 2px 1px #e8e8e8; }
.date { display: block; margin: 24px 0 25px; text-align: center; font-size: 22px; line-height: 32px; color: #888; }

/* Embedded browser window in the post */
.shot {
  --strip: #112222; --bar: #2c3e3d; --omni: #182827;
  --strip-h: 49px; --ts-w: 34px; --ts-h: 33px; --ts-r: 11px; --strip-pad: 7px; --ts-gap: 8px;
  --tab-w: 251px; --tab-h: 42px; --tab-r: 11px; --tab-pad: 10px; --fav: 20px; --tab-fs: 13px;
  --close: 16px; --close-box: 20px; --plus: 20px; --win-w: 55px; --win-icon: 13px;
  --tool: 44px; --icon: 22px; --bar-pad: 7px; --omni-h: 41px; --omni-gap: 10px; --info: 29px; --info-icon: 20px; --url-fs: 17px;
  --sep-w: 22px; --sep-h: 20px; --sep-t: 2px; --avatar: 24px; --avatar-fs: 10px;
  --bm-h: 50px; --bm-icon: 20px; --bm-pad: 15px; --bm-w: 1037px; --folder-gap: 24px; --folder-lead: 22px; --edge: 1px;
  --sb-w: 17px; --tri: 11px; --thumb-w: 10px; --thumb-h: 266px; --sb-pad: 3px;
  width: 1601px; max-width: 100%; height: 900px; margin: 0 auto; border-radius: 8px 8px 0 0; overflow: hidden;
}
.shot .tab { margin-right: 6px; }
.shot .tab:not(.tab-active)::after { content: ""; position: absolute; right: -4px; top: 7px; width: 2px; height: 20px; background: #2f4341; }
.shot .new-tab { margin-left: 0; }
.shot .toolbar { padding: var(--bar-pad) 4px 0 5px; }
.shot .omni { margin-right: 10px; padding: 0 6px; }
.shot .url { margin-left: 10px; }
.shot .bookmark-star { width: 48px; }
.shot .page { background: #83bfbf; font-family: "Noto Sans CJK JP", sans-serif; }
.shot .scrollbar svg { height: 11px; }
.shot .thumb { margin-top: 8px; }
.shot .site { background: #d7dddd; }
.shot .site-header { height: 126px; background: #3b9b98; padding: 0 24px 0 26px; }
.brand-name { font: italic 700 47px/52px "Roboto Condensed", Lato, sans-serif; color: #3b2418; }
.shot .tagline { font-size: 16px; line-height: 24px; }
.shot .site-nav { gap: 36px; }
.shot .site-nav a { font-size: 24px; line-height: 40px; padding: 0 18px; border-bottom-width: 2px; }
.shot .crumbs { padding: 10px 25px 0; font-size: 16px; line-height: 24px; }
.shot .crumbs a { color: #3b82f6; margin-left: 48px; }
.shot .gt { font-size: 15px; margin: 0 12px 0 16px; }
.about { padding: 42px 122px 0; }
h3 { margin: 0; font-size: 65px; line-height: 80px; letter-spacing: 2px; color: #000; }
.about p { margin: 16px 0 54px; font-size: 24px; line-height: 36px; color: #444; }
.portrait { width: 190px; height: 190px; margin: 0 0 0 255px; border: 4px solid #4a2222; border-radius: 50%; background: #80bdbd; box-shadow: 0 0 16px rgba(0, 0, 0, 0.1); }
```
